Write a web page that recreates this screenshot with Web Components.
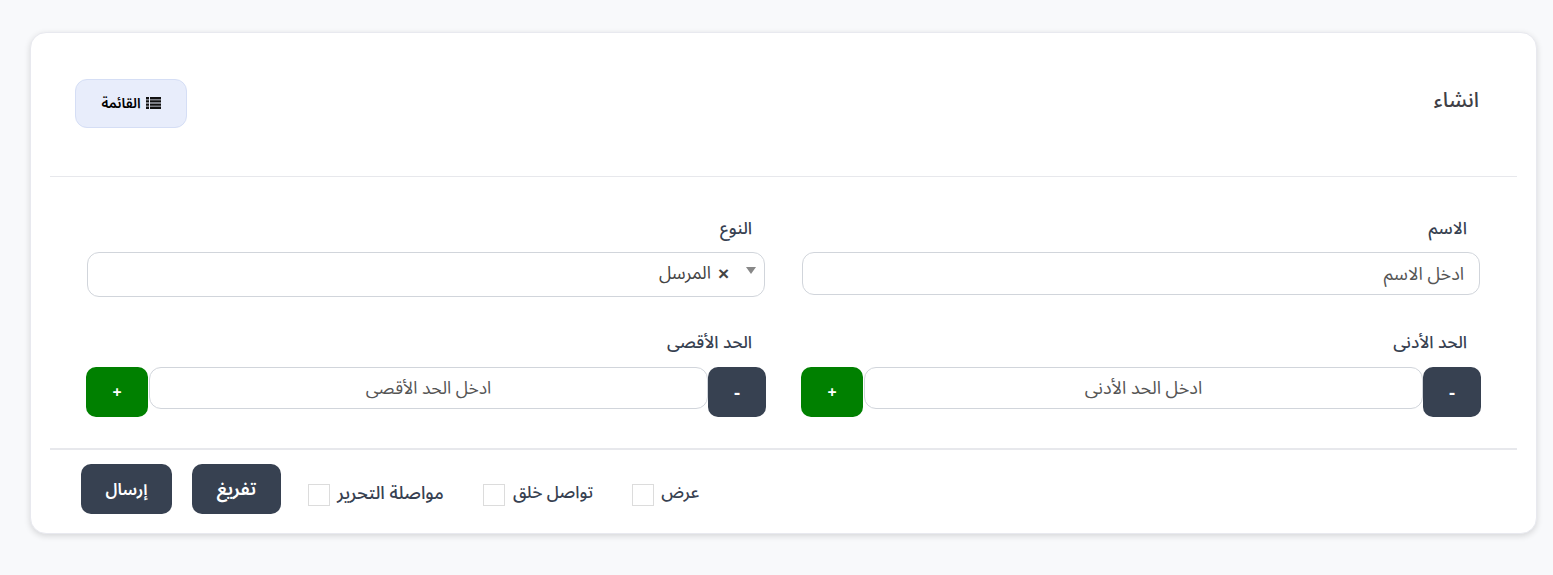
<!DOCTYPE html>
<html lang="ar" dir="rtl"><head><meta charset="utf-8">
<style>
html,body{margin:0;height:575px;overflow:hidden;background:#f8f9fb}
body{padding:32px 16px 0 30px;box-sizing:border-box;font-family:"Noto Sans Arabic","Noto Sans","DejaVu Sans",sans-serif;color:#374151}
</style></head><body>
<x-form-card>
 <span slot="title">انشاء</span>
 <x-list-btn slot="action">القائمة</x-list-btn>
 <x-field label="الاسم"><x-text-box text="ادخل الاسم"></x-text-box></x-field>
 <x-field label="النوع"><x-select-box text="المرسل"></x-select-box></x-field>
 <x-field label="الحد الأدنى" class="s"><x-stepper text="ادخل الحد الأدنى"></x-stepper></x-field>
 <x-field label="الحد الأقصى" class="s"><x-stepper text="ادخل الحد الأقصى" style="font-size:17.5px"></x-stepper></x-field>
 <x-check slot="footer" style="margin-left:39px;--g:7px">عرض</x-check>
 <x-check slot="footer" style="margin-left:39px;--g:8px">تواصل خلق</x-check>
 <x-check slot="footer" style="margin-left:27px;--g:7px;font-size:18px">مواصلة التحرير</x-check>
 <x-action slot="footer" style="margin-left:20px;width:89px;font-size:18.5px">تفريغ</x-action>
 <x-action slot="footer" style="width:91px;font-size:16.5px">إرسال</x-action>
</x-form-card>
<script>
const def=(n,html)=>customElements.define(n,class extends HTMLElement{
 connectedCallback(){if(this.shadowRoot)return;const r=this.attachShadow({mode:'open'});r.innerHTML=html;
  r.querySelectorAll('[data-t]').forEach(e=>e.textContent=this.getAttribute(e.dataset.t)||'');}
});
def('x-form-card',`<style>
:host{display:block;width:1507px;height:502px;box-sizing:border-box;background:#fff;border:1px solid #e8e9ef;border-radius:16px;box-shadow:0 2px 6px rgba(0,0,0,.14);overflow:hidden}
header{height:143px;margin:0 19px;border-bottom:1px solid #e7e8ec;display:flex;justify-content:space-between;padding:0 38px 0 25px}
.t{font-size:21px;font-weight:500;color:#3f3f46;line-height:28px;margin-top:53px}
.a{margin-top:46px}
main{height:271px;padding:0 56px;display:grid;grid-template-columns:678px 678px;column-gap:37px;grid-template-rows:123px 148px;box-sizing:border-box;margin:0}
footer{height:85px;margin:0 19px;border-top:2px solid #e7e8ec;box-sizing:border-box;display:flex;justify-content:flex-end;align-items:flex-start;padding:14px 0 0 31px}
</style><header><div class="t"><slot name="title"></slot></div><div class="a"><slot name="action"></slot></div></header><main><slot></slot></main><footer><slot name="footer"></slot></footer>`);
def('x-field',`<style>
:host{display:block;padding-top:40px}
:host(.s){padding-top:31px}
label{display:block;font-size:17px;font-weight:500;color:#374151;line-height:24px;padding-right:13px;margin-bottom:11px}
:host(.s) label{margin-bottom:12px}
</style><label data-t="label"></label><slot></slot>`);
def('x-text-box',`<style>
:host{display:flex;align-items:center;height:43px;box-sizing:border-box;border:1px solid #d1d5db;border-radius:12px;background:#fff;padding:0 15px;font-size:18px;color:#555}
</style><span data-t="text"></span>`);
def('x-select-box',`<style>
:host{display:flex;align-items:center;height:45px;box-sizing:border-box;border:1px solid #d1d5db;border-radius:12px;background:#fff;position:relative;padding:0 35px 3px 0;font-size:17.6px;color:#444}
b{font:900 19px/1 "Liberation Sans",sans-serif;margin-left:7px;color:#444}
svg{position:absolute;right:8px;top:14px}
</style><svg width="10" height="7" viewBox="0 0 10 7"><path d="M0 0h10L5 7z" fill="#888"/></svg><b>×</b><span data-t="text"></span>`);
def('x-stepper',`<style>
:host{display:flex;align-items:flex-start;margin:0 -1px;font-size:18px;color:#555}
button{all:unset;box-sizing:border-box;height:50px;border-radius:10px;color:#fff;font:700 16px "Noto Sans",sans-serif;display:flex;align-items:center;justify-content:center;flex:none}
.m{width:58px;background:#374151;font-size:19px;font-weight:600}
.p{width:62px;background:#008000;margin-right:1px}
.c{flex:1;height:42px;box-sizing:border-box;border:1px solid #d1d5db;border-radius:12px;display:flex;align-items:center;justify-content:center;background:#fff}
</style><button class="m">-</button><div class="c" data-t="text"></div><button class="p">+</button>`);
def('x-list-btn',`<style>
:host{display:flex;align-items:center;justify-content:center;gap:5px;width:112px;height:49px;box-sizing:border-box;background:#e8edfb;border:1px solid #d5def5;border-radius:12px;font-size:14px;font-weight:600;color:#000}
svg{display:block;margin-top:-1px}
</style><svg width="15" height="12" viewBox="0 0 15 12" fill="#111"><path d="M0 0h3v2.4H0zM4 0h11v2.4H4zM0 3.2h3v2.4H0zM4 3.2h11v2.4H4zM0 6.4h3v2.4H0zM4 6.4h11v2.4H4zM0 9.6h3V12H0zM4 9.6h11V12H4z"/></svg><span><slot></slot></span>`);
def('x-check',`<style>
:host{display:flex;align-items:center;gap:var(--g,7px);height:50px;padding-top:8px;box-sizing:border-box;font-size:17px;font-weight:500;color:#374151;white-space:nowrap}
i{display:block;width:22px;height:22px;box-sizing:border-box;border:1px solid #dcdcdc;background:#fff;margin-top:4px}
</style><span><slot></slot></span><i></i>`);
def('x-action',`<style>
:host{display:flex;align-items:center;justify-content:center;height:50px;box-sizing:border-box;background:#374151;border-radius:10px;color:#fff;font-size:17px;font-weight:600}
</style><slot></slot>`);
</script></body></html>
